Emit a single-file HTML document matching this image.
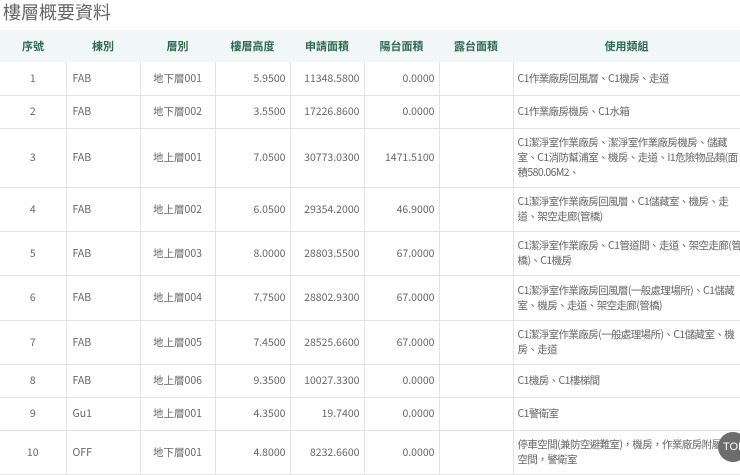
<!DOCTYPE html>
<html><head><meta charset="utf-8"><style>
body{margin:0;width:740px;height:463px;overflow:hidden;background:#fff;font-family:"Liberation Sans","Noto Sans CJK TC",sans-serif;}
h1{position:absolute;left:3px;top:-1px;margin:0;font-size:18px;font-weight:normal;color:#666;font-family:"Noto Sans CJK TC",sans-serif;}
table{position:absolute;left:0;top:30px;border-collapse:collapse;table-layout:fixed;width:740px;font-family:"Noto Sans CJK TC",sans-serif;}
th{height:32px;background:#f1f6f7;color:#2e6b50;font-size:11px;font-weight:bold;padding:0;border:none;}
td{font-size:10.5px;color:#666;padding:0 6px;border-right:1px solid #e3e3e3;border-bottom:1px solid #e3e3e3;line-height:15px;white-space:nowrap;overflow:visible;}
td:first-child{text-align:center;}
td:nth-child(3){text-align:center;}
td:nth-child(4),td:nth-child(5),td:nth-child(6){text-align:right;padding-right:4px;}
td:last-child{border-right:none;padding-left:4px;letter-spacing:-0.6px;}
.top{position:absolute;left:718px;top:432px;width:30px;height:30px;border-radius:50%;background:#6d6d6d;color:#fff;font-size:11px;line-height:30px;text-indent:5px;font-family:"Liberation Sans",sans-serif;}
</style></head><body>
<h1>樓層概要資料</h1>
<table>
<colgroup><col style="width:66px"><col style="width:74px"><col style="width:75px"><col style="width:75px"><col style="width:74px"><col style="width:75px"><col style="width:74px"><col style="width:227px"></colgroup>
<tr><th>序號</th><th>棟別</th><th>層別</th><th>樓層高度</th><th>申請面積</th><th>陽台面積</th><th>露台面積</th><th>使用類組</th></tr>
<tr style="height:33px"><td>1</td><td>FAB</td><td>地下層001</td><td>5.9500</td><td>11348.5800</td><td>0.0000</td><td></td><td>C1作業廠房回風層、C1機房、走道</td></tr>
<tr style="height:33px"><td>2</td><td>FAB</td><td>地下層002</td><td>3.5500</td><td>17226.8600</td><td>0.0000</td><td></td><td>C1作業廠房機房、C1水箱</td></tr>
<tr style="height:59px"><td>3</td><td>FAB</td><td>地上層001</td><td>7.0500</td><td>30773.0300</td><td>1471.5100</td><td></td><td>C1潔淨室作業廠房、潔淨室作業廠房機房、儲藏<br>室、C1消防幫浦室、機房、走道、I1危險物品類(面<br>積580.06M2、</td></tr>
<tr style="height:44px"><td>4</td><td>FAB</td><td>地上層002</td><td>6.0500</td><td>29354.2000</td><td>46.9000</td><td></td><td>C1潔淨室作業廠房回風層、C1儲藏室、機房、走<br>道、架空走廊(管橋)</td></tr>
<tr style="height:44px"><td>5</td><td>FAB</td><td>地上層003</td><td>8.0000</td><td>28803.5500</td><td>67.0000</td><td></td><td>C1潔淨室作業廠房、C1管道間、走道、架空走廊(管<br>橋)、C1機房</td></tr>
<tr style="height:45px"><td>6</td><td>FAB</td><td>地上層004</td><td>7.7500</td><td>28802.9300</td><td>67.0000</td><td></td><td>C1潔淨室作業廠房回風層(一般處理場所)、C1儲藏<br>室、機房、走道、架空走廊(管橋)</td></tr>
<tr style="height:44px"><td>7</td><td>FAB</td><td>地上層005</td><td>7.4500</td><td>28525.6600</td><td>67.0000</td><td></td><td>C1潔淨室作業廠房(一般處理場所)、C1儲藏室、機<br>房、走道</td></tr>
<tr style="height:33px"><td>8</td><td>FAB</td><td>地上層006</td><td>9.3500</td><td>10027.3300</td><td>0.0000</td><td></td><td>C1機房、C1樓梯間</td></tr>
<tr style="height:33px"><td>9</td><td>Gu1</td><td>地上層001</td><td>4.3500</td><td>19.7400</td><td>0.0000</td><td></td><td>C1警衛室</td></tr>
<tr style="height:44px"><td>10</td><td>OFF</td><td>地下層001</td><td>4.8000</td><td>8232.6600</td><td>0.0000</td><td></td><td>停車空間(兼防空避難室)，機房，作業廠房附屬設施<br>空間，警衛室</td></tr>
</table>
<div class="top">TOP</div>
</body></html>
